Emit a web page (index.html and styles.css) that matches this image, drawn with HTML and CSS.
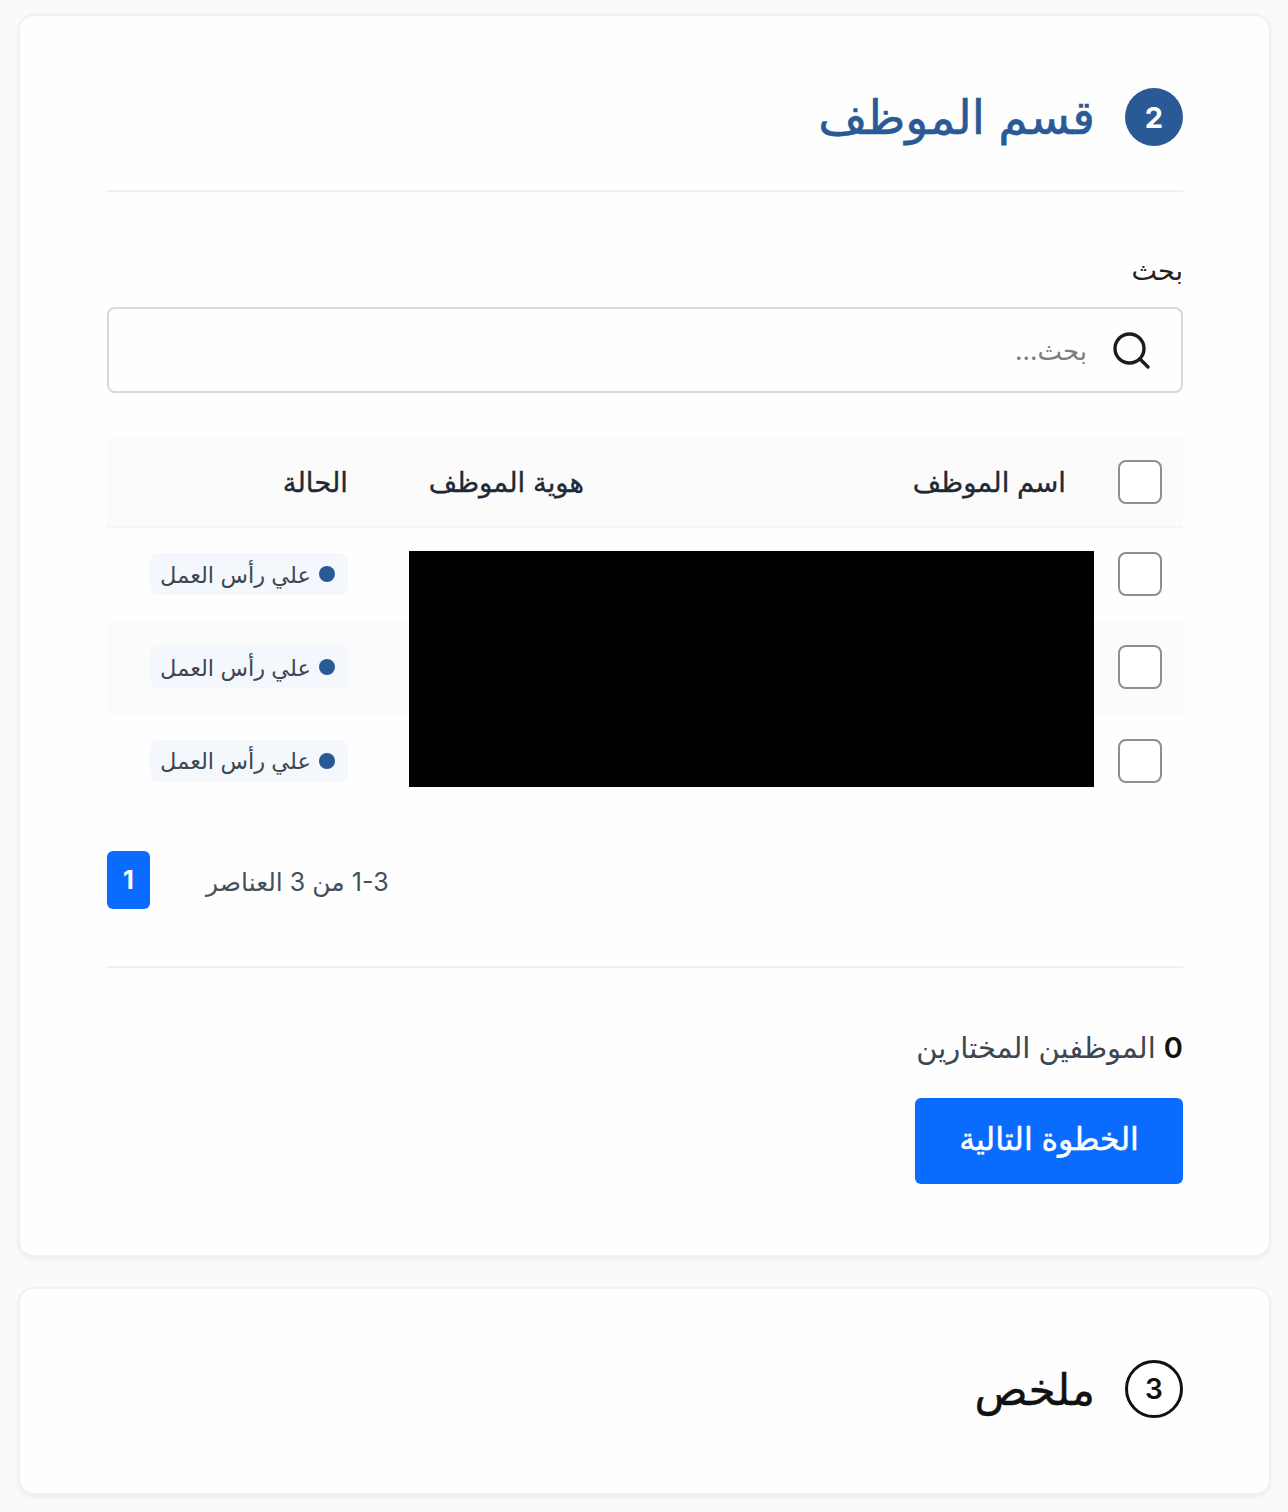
FILE: index.html
```html
<!DOCTYPE html>
<html lang="ar" dir="rtl">
<head>
  <meta charset="utf-8">
  <title>قسم الموظف</title>
  <link rel="stylesheet" href="styles.css">
</head>
<body>
  <section class="card step-active">
    <div class="step-header">
      <span class="step-num">2</span>
      <h2 class="step-title">قسم الموظف</h2>
    </div>

    <label class="field-label" for="search">بحث</label>
    <div class="search-box">
      <svg class="search-icon" viewBox="0 0 40 40" fill="none" stroke="#1c1c1c" stroke-width="3.4" stroke-linecap="round">
        <circle cx="18.5" cy="18.5" r="14.5"/>
        <path d="M29 29l8 8"/>
      </svg>
      <input id="search" type="text" placeholder="بحث...">
    </div>

    <div class="table-wrap">
      <table class="staff-table">
        <colgroup>
          <col class="col-check">
          <col class="col-name">
          <col class="col-id">
          <col class="col-status">
        </colgroup>
        <thead>
          <tr>
            <th><span class="check"></span></th>
            <th>اسم الموظف</th>
            <th>هوية الموظف</th>
            <th>الحالة</th>
          </tr>
        </thead>
        <tbody>
          <tr>
            <td><span class="check"></span></td>
            <td></td>
            <td></td>
            <td><span class="badge"><i class="dot"></i>علي رأس العمل</span></td>
          </tr>
          <tr class="alt">
            <td><span class="check"></span></td>
            <td></td>
            <td></td>
            <td><span class="badge"><i class="dot"></i>علي رأس العمل</span></td>
          </tr>
          <tr>
            <td><span class="check"></span></td>
            <td></td>
            <td></td>
            <td><span class="badge"><i class="dot"></i>علي رأس العمل</span></td>
          </tr>
        </tbody>
      </table>
      <div class="redacted"></div>
    </div>

    <div class="pagination">
      <span class="page-total">1-3 من 3 العناصر</span>
      <span class="page-btn">1</span>
    </div>

    <div class="selected-count"><b>0</b> الموظفين المختارين</div>
    <button class="next-btn" type="button">الخطوة التالية</button>
  </section>

  <section class="card step-next">
    <div class="step-header">
      <span class="step-num outline">3</span>
      <h2 class="step-title dark">ملخص</h2>
    </div>
  </section>
</body>
</html>
```

FILE: styles.css
```css
* {
  margin: 0;
  padding: 0;
  box-sizing: border-box;
}

html, body {
  width: 100%;
  height: 100%;
  overflow: hidden;
}

body {
  font-family: 'Inter', 'DejaVu Sans', sans-serif;
  background-color: #fafafa;
  color: #1f2933;
  padding: 14px 17px 0 18px;
}

.card {
  background: #fefefe;
  border: 2px solid #f1f1f1;
  border-radius: 16px;
  box-shadow: 0 2px 4px rgba(0, 0, 0, 0.06);
  padding: 0 86px 0 87px;
}

.step-active {
  height: 1243px;
  margin-bottom: 30px;
  padding-top: 72px;
}

.step-next {
  height: 208px;
  padding-top: 71px;
}

.step-header {
  display: flex;
  align-items: center;
  gap: 30px;
}

.step-num {
  width: 58px;
  height: 58px;
  border-radius: 50%;
  background: #2a5a96;
  color: #fff;
  font-size: 29px;
  font-weight: 700;
  display: flex;
  align-items: center;
  justify-content: center;
  flex-shrink: 0;
}

.step-num.outline {
  background: #fff;
  border: 3px solid #111;
  color: #111;
  font-size: 28px;
  font-weight: 600;
}

.step-title {
  font-size: 47.5px;
  font-weight: 400;
  line-height: 58px;
  color: #2a5a96;
  -webkit-text-stroke: 0.6px;
}

.step-title.dark {
  font-size: 44px;
  color: #111;
  -webkit-text-stroke: 0.4px;
}

.step-active .step-header {
  padding-bottom: 44px;
  border-bottom: 2px solid #f0f0f0;
  margin-bottom: 58px;
}

.field-label {
  display: block;
  font-size: 27px;
  line-height: 42px;
  color: #222;
  margin-bottom: 15px;
}

.search-box {
  height: 86px;
  border: 2px solid #d9d9d9;
  border-radius: 8px;
  display: flex;
  align-items: center;
  gap: 24px;
  padding: 0 30px;
  margin-bottom: 44px;
}

.search-icon {
  width: 40px;
  height: 40px;
  flex-shrink: 0;
}

.search-box input {
  flex: 1;
  border: 0;
  outline: 0;
  background: none;
  font: inherit;
  font-size: 26px;
  color: #222;
}

.search-box input::placeholder {
  color: #7d7d7d;
}

.table-wrap {
  position: relative;
}

.staff-table {
  width: 100%;
  table-layout: fixed;
  border-collapse: collapse;
}

.col-check {
  width: 89px;
}

.col-name {
  width: 482px;
}

.col-id {
  width: 236px;
}

.staff-table th {
  height: 90px;
  background: #fbfbfb;
  border-bottom: 2px solid #f6f6f6;
  font-size: 27.5px;
  font-weight: 400;
  text-align: right;
  padding: 0 28px;
  color: #1f2933;
  -webkit-text-stroke: 0.35px;
}

.staff-table td {
  height: 93.5px;
  padding: 0 28px;
  text-align: right;
}

.staff-table th:first-child,
.staff-table td:first-child {
  padding: 0 21px 0 0;
}

.staff-table tr.alt td {
  background: #fbfbfb;
}

.check {
  display: block;
  width: 44px;
  height: 44px;
  background: #fff;
  border: 2px solid #8f8f8f;
  border-radius: 8px;
}

.badge {
  display: inline-flex;
  align-items: center;
  gap: 8px;
  height: 42px;
  padding: 0 13px 0 10px;
  background: #f4f8fd;
  border-radius: 8px;
  font-size: 22.5px;
  color: #3d4752;
  white-space: nowrap;
}

.dot {
  width: 16px;
  height: 16px;
  border-radius: 50%;
  background: #2a5a96;
  flex-shrink: 0;
}

/* black block over the name and id columns */
.redacted {
  position: absolute;
  left: 302px;
  top: 114px;
  width: 685px;
  height: 236px;
  background: #000;
}

.pagination {
  display: flex;
  justify-content: flex-end;
  align-items: center;
  gap: 56px;
  margin-top: 43px;
  padding-bottom: 57px;
  border-bottom: 2px solid #f0f0f0;
  margin-bottom: 58px;
}

.page-btn {
  width: 43px;
  height: 58px;
  background: #0a6cff;
  color: #fff;
  border-radius: 6px;
  font-size: 25px;
  font-weight: 700;
  display: flex;
  align-items: center;
  justify-content: center;
}

.page-total {
  font-size: 25px;
  padding-top: 4px;
  color: #454f59;
}

.selected-count {
  font-size: 29px;
  line-height: 44px;
  color: #3d4752;
  margin-bottom: 28px;
}

.selected-count b {
  font-weight: 600;
  color: #111;
}

.next-btn {
  display: block;
  width: 268px;
  height: 86px;
  padding-bottom: 4px;
  background: #0a6cff;
  color: #fff;
  border: 0;
  border-radius: 6px;
  font: inherit;
  font-size: 31.5px;
  font-weight: 400;
  -webkit-text-stroke: 0.5px;
}
```
